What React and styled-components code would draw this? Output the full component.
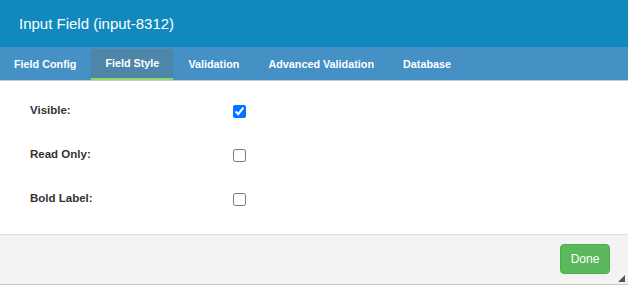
import styled, { createGlobalStyle } from 'styled-components'

const GlobalStyle = createGlobalStyle`
  html, body {
    margin: 0;
    padding: 0;
    background: #ffffff;
    font-family: "Liberation Sans", Arial, sans-serif;
  }
`

const Dialog = styled.div`
  width: 628px;
  height: 284px;
  display: flex;
  flex-direction: column;
  position: relative;
  border-bottom: 1px solid #c8c8c8;
`

const Header = styled.div`
  height: 48px;
  background: #1289be;
  color: #ffffff;
  display: flex;
  align-items: center;
  padding-left: 19px;
  font-size: 15px;
`

const TabBar = styled.div`
  height: 33px;
  background: #4590c4;
  border-bottom: 1px solid #c9c9c9;
  display: flex;
  align-items: flex-end;
`

const Tab = styled.div`
  height: ${p => (p.$active ? '31px' : '33px')};
  padding: 0 14px;
  margin-right: 1px;
  box-sizing: border-box;
  display: flex;
  align-items: center;
  padding-top: ${p => (p.$active ? '0' : '2px')};
  color: #ffffff;
  font-size: 10.8px;
  font-weight: bold;
  background: ${p => (p.$active ? '#4e86a8' : 'transparent')};
  border-radius: ${p => (p.$active ? '3px 3px 0 0' : '0')};
  border-bottom: ${p => (p.$active ? '2px solid #8fd86a' : 'none')};
`

const Body = styled.div`
  flex: 1;
  padding: 21px 0 0 30px;
  display: flex;
  flex-direction: column;
`

const Row = styled.div`
  display: grid;
  grid-template-columns: 203px auto;
  height: 44px;
  align-items: start;
`

const Label = styled.span`
  font-size: 11.5px;
  font-weight: bold;
  color: #333333;
  line-height: 16px;
`

const Check = styled.input`
  margin: 3px 0 0 0;
  width: 13px;
  height: 13px;
`

const Footer = styled.div`
  height: 51px;
  background: #f3f3f3;
  border-top: 1px solid #dcdcdc;
  display: flex;
  justify-content: flex-end;
  align-items: center;
  padding-right: 18px;
`

const DoneButton = styled.button`
  width: 50px;
  height: 30px;
  background: #5cb85c;
  border: 1px solid #4cae4c;
  border-radius: 4px;
  color: #ffffff;
  font-family: "Liberation Sans", Arial, sans-serif;
  font-size: 12px;
  padding: 0;
`

const Grip = styled.svg`
  position: absolute;
  right: 3px;
  bottom: 2px;
`

const rows = [
  { label: 'Visible:', checked: true },
  { label: 'Read Only:', checked: false },
  { label: 'Bold Label:', checked: false },
]

const tabs = ['Field Config', 'Field Style', 'Validation', 'Advanced Validation', 'Database']

export default function App() {
  return (
    <>
      <GlobalStyle />
      <Dialog>
        <Header>Input Field (input-8312)</Header>
        <TabBar>
          {tabs.map(t => (
            <Tab key={t} $active={t === 'Field Style'}>{t}</Tab>
          ))}
        </TabBar>
        <Body>
          {rows.map(r => (
            <Row key={r.label}>
              <Label>{r.label}</Label>
              <Check type="checkbox" defaultChecked={r.checked} />
            </Row>
          ))}
        </Body>
        <Footer>
          <DoneButton>Done</DoneButton>
        </Footer>
        <Grip width="7" height="7" viewBox="0 0 7 7">
          <polygon points="7,0 7,7 0,7" fill="#555" />
        </Grip>
      </Dialog>
    </>
  )
}
